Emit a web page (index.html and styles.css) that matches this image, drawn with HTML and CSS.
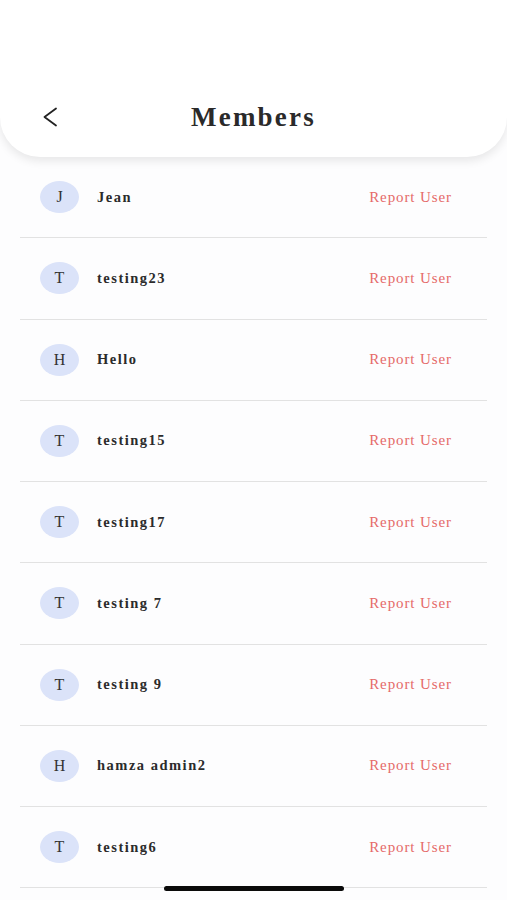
FILE: index.html
```html
<!DOCTYPE html>
<html lang="en">
<head>
    <meta charset="UTF-8">
    <meta name="viewport" content="width=device-width, initial-scale=1.0">
    <title>Members</title>
    <link rel="stylesheet" href="styles.css">
</head>
<body>
    <header class="topbar">
        <div class="topbar-row">
            <button class="back" type="button" aria-label="Back">
                <svg width="20" height="24" viewBox="0 0 20 24">
                    <polyline points="14,3.5 2.5,12 14,20.5" fill="none" stroke="#222" stroke-width="1.8" stroke-linecap="round" stroke-linejoin="round"/>
                </svg>
            </button>
            <h1>Members</h1>
        </div>
    </header>

    <ul class="members">
        <li class="member"><span class="avatar">J</span><span class="name">Jean</span><a class="report">Report User</a></li>
        <li class="member"><span class="avatar">T</span><span class="name">testing23</span><a class="report">Report User</a></li>
        <li class="member"><span class="avatar">H</span><span class="name">Hello</span><a class="report">Report User</a></li>
        <li class="member"><span class="avatar">T</span><span class="name">testing15</span><a class="report">Report User</a></li>
        <li class="member"><span class="avatar">T</span><span class="name">testing17</span><a class="report">Report User</a></li>
        <li class="member"><span class="avatar">T</span><span class="name">testing 7</span><a class="report">Report User</a></li>
        <li class="member"><span class="avatar">T</span><span class="name">testing 9</span><a class="report">Report User</a></li>
        <li class="member"><span class="avatar">H</span><span class="name">hamza admin2</span><a class="report">Report User</a></li>
        <li class="member"><span class="avatar">T</span><span class="name">testing6</span><a class="report">Report User</a></li>
    </ul>

    <div class="home-indicator"></div>
</body>
</html>
```

FILE: styles.css
```css
body {
    font-family: 'Liberation Serif', 'Times New Roman', serif;
    background-color: #fdfdfe;
    color: #222222;
    margin: 0;
    padding: 0;
    overflow: hidden;
}
.topbar {
    height: 157px;
    box-sizing: border-box;
    background-color: #ffffff;
    border-radius: 0 0 40px 40px;
    box-shadow: 0 4px 10px rgba(0,0,0,0.09);
    display: flex;
    align-items: flex-end;
    padding: 0 20px 20px;
    position: relative;
    z-index: 1;
}
.topbar-row {
    height: 40px;
    width: 100%;
    display: flex;
    align-items: center;
    position: relative;
}
.back {
    background: none;
    border: none;
    padding: 0;
    margin-left: 22px;
    width: 20px;
    height: 24px;
    cursor: pointer;
}
.topbar h1 {
    position: absolute;
    left: 0;
    right: 0;
    margin: 0;
    text-align: center;
    font-size: 27px;
    font-weight: bold;
    letter-spacing: 2.2px;
    color: #2a2a2a;
    pointer-events: none;
}
.members {
    list-style: none;
    margin: 0 20px;
    padding: 0;
}
.member {
    height: 81.25px;
    box-sizing: border-box;
    display: flex;
    align-items: center;
    padding: 0 35px 0 20px;
    border-bottom: 1.5px solid #e2e2e2;
}
.avatar {
    width: 39px;
    height: 32px;
    border-radius: 50%;
    background-color: #dbe3f9;
    color: #333333;
    font-size: 16px;
    display: flex;
    align-items: center;
    justify-content: center;
    flex-shrink: 0;
}
.name {
    margin-left: 18px;
    font-size: 14.5px;
    font-weight: bold;
    letter-spacing: 1.5px;
    color: #2b2b2b;
    flex: 1;
}
.report {
    font-size: 15px;
    letter-spacing: 0.9px;
    color: #e56a69;
    cursor: pointer;
}
.home-indicator {
    position: fixed;
    left: 164px;
    bottom: 9px;
    width: 180px;
    height: 5px;
    border-radius: 3px;
    background-color: #0a0a0a;
}
```
